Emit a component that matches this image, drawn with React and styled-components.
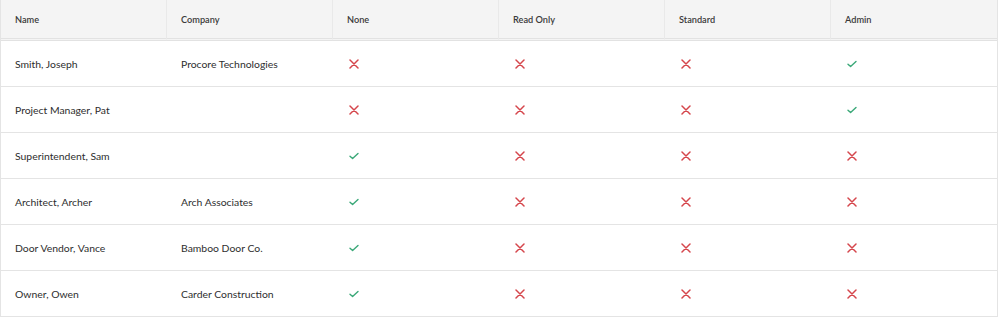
import React from 'react';
import styled, { createGlobalStyle } from 'styled-components';

const GlobalStyle = createGlobalStyle`
  body {
    margin: 0;
    background: #fff;
    font-family: Lato, "Noto Sans", sans-serif;
  }
`;

const Wrapper = styled.div`
  width: 996px;
  border-left: 1px solid #e4e4e4;
  border-right: 2px solid #e4e4e4;
`;

const Table = styled.div`
  display: grid;
  grid-template-columns: repeat(6, 1fr);
`;

const HeaderCell = styled.div`
  height: 38px;
  display: flex;
  align-items: center;
  padding-left: 14px;
  background: #f4f4f4;
  border-right: ${props => (props.last ? 'none' : '1px solid #e9e9e9')};
  border-bottom: 3px double #e2e2e2;
  font-size: 9.2px;
  font-weight: 600;
  color: #3a3a3a;
`;

const Cell = styled.div`
  height: 45px;
  display: flex;
  align-items: center;
  padding-left: 14px;
  border-bottom: 1px solid #e4e4e4;
  font-size: 10.4px;
  color: #2e2e2e;
`;

const Cross = () => (
  <svg width="10" height="10" viewBox="0 0 10 10">
    <path d="M1 1 L9 9 M9 1 L1 9" stroke="#d5464c" strokeWidth="1.5" strokeLinecap="round" />
  </svg>
);

const Check = () => (
  <svg width="10" height="8" viewBox="0 0 10 8">
    <path d="M1 4.2 L3.6 6.6 L9 1.6" fill="none" stroke="#3aa878" strokeWidth="1.4" strokeLinecap="round" strokeLinejoin="round" />
  </svg>
);

const IconSlot = styled.span`
  display: inline-flex;
  margin-left: 2px;
`;

const columns = ['Name', 'Company', 'None', 'Read Only', 'Standard', 'Admin'];

const people = [
  { name: 'Smith, Joseph', company: 'Procore Technologies', level: 3 },
  { name: 'Project Manager, Pat', company: '', level: 3 },
  { name: 'Superintendent, Sam', company: '', level: 0 },
  { name: 'Architect, Archer', company: 'Arch Associates', level: 0 },
  { name: 'Door Vendor, Vance', company: 'Bamboo Door Co.', level: 0 },
  { name: 'Owner, Owen', company: 'Carder Construction', level: 0 },
];

const App = () => (
  <>
    <GlobalStyle />
    <Wrapper>
      <Table>
        {columns.map((col, i) => (
          <HeaderCell key={col} last={i === columns.length - 1}>{col}</HeaderCell>
        ))}
        {people.map((p) => (
          <React.Fragment key={p.name}>
            <Cell>{p.name}</Cell>
            <Cell>{p.company}</Cell>
            {[0, 1, 2, 3].map((lvl) => (
              <Cell key={lvl}>
                <IconSlot>{lvl === p.level ? <Check /> : <Cross />}</IconSlot>
              </Cell>
            ))}
          </React.Fragment>
        ))}
      </Table>
    </Wrapper>
  </>
);

export default App;
